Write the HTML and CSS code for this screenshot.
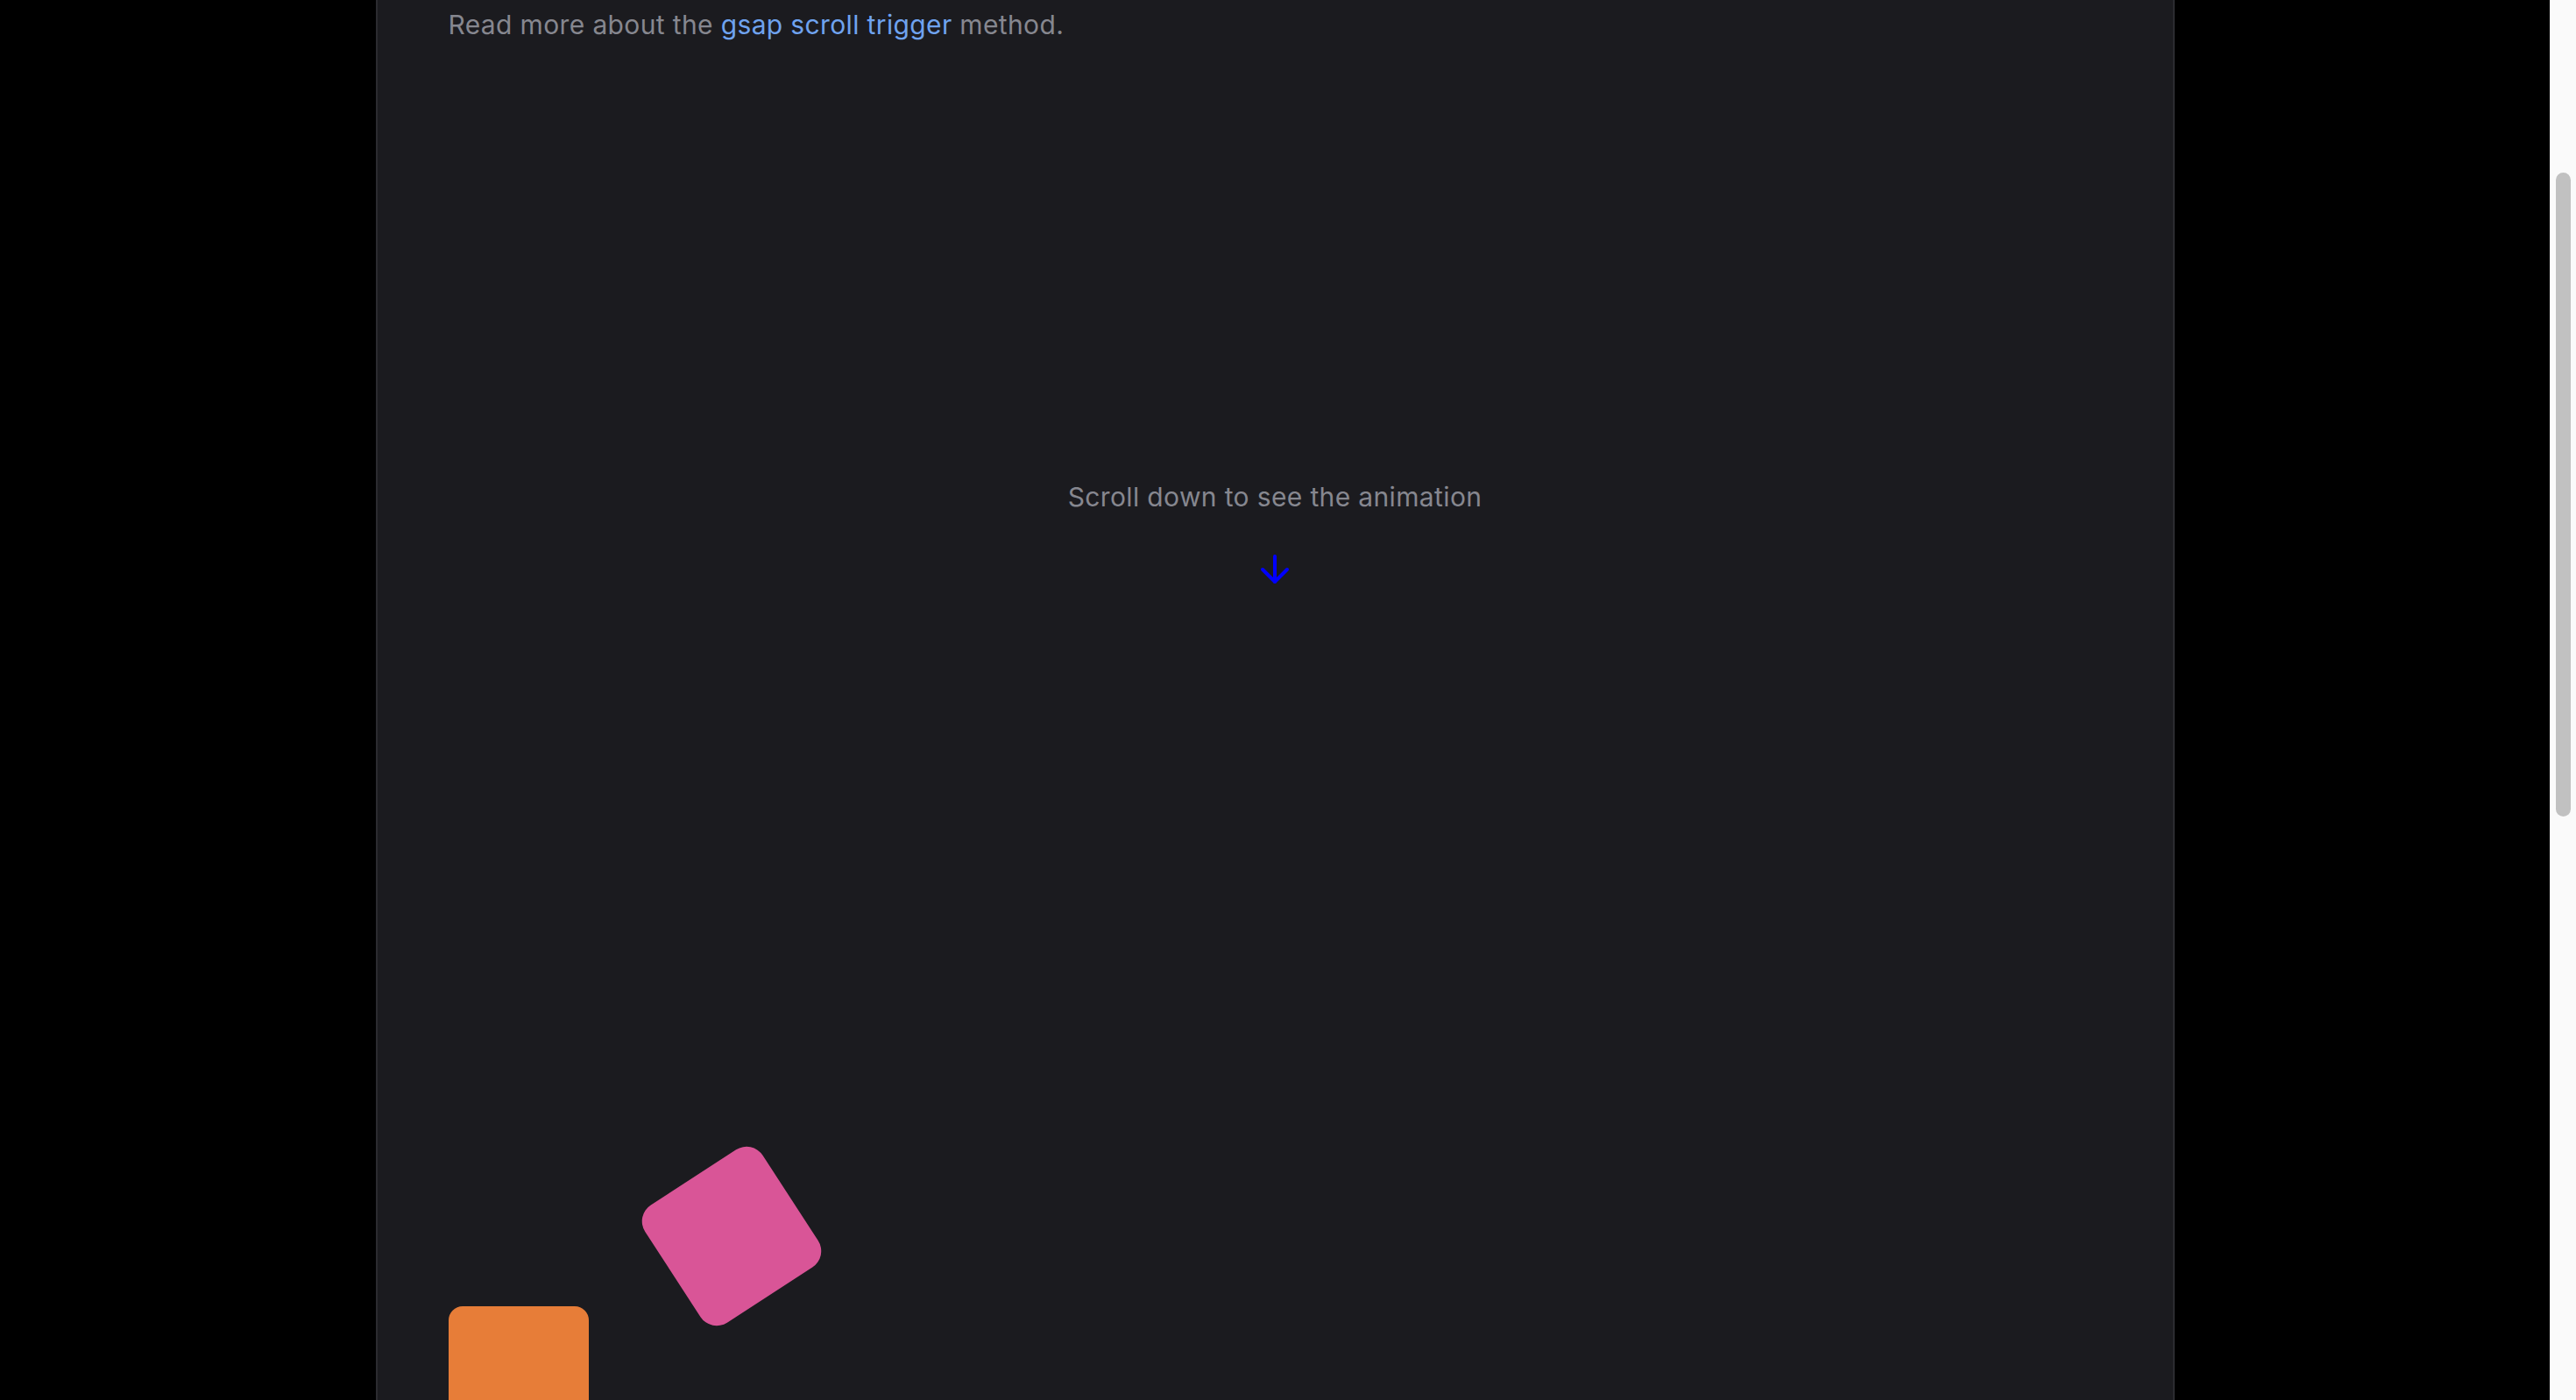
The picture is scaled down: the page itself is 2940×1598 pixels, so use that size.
FILE: index.html
```html
<!DOCTYPE html>
<html lang="en">
<head>
<meta charset="utf-8">
<title>GSAP Scroll Trigger</title>
<link rel="stylesheet" href="styles.css">
</head>
<body>
<div class="page">
  <div class="main">
    <div class="container">
      <p class="intro">Read more about the <a class="link" href="#">gsap scroll trigger</a> method.</p>
      <p class="hint">Scroll down to see the animation</p>
      <div class="arrow">
        <svg width="36" height="36" viewBox="0 0 36 36" fill="none" stroke="#0000ff" stroke-width="4" stroke-linecap="round" stroke-linejoin="round">
          <path d="M18 3 V32"/>
          <path d="M4 18 L18 32 L32 18"/>
        </svg>
      </div>
      <div class="shapes">
        <div class="box orange"></div>
        <div class="box pink"></div>
      </div>
    </div>
  </div>
  <div class="scrollbar"><div class="thumb"></div></div>
</div>
</body>
</html>
```
FILE: styles.css
```css
html, body {
  margin: 0;
  padding: 0;
  background: #000;
}
.page {
  display: flex;
  height: 1598px;
  overflow: hidden;
  background: #000;
  font-family: Inter, "Noto Sans", "Liberation Sans", sans-serif;
}
.main {
  flex: 1;
  display: flex;
  justify-content: center;
}
.container {
  width: 2053px;
  box-sizing: border-box;
  border-left: 2px solid #2b2b30;
  border-right: 2px solid #2b2b30;
  background: #1b1b1f;
  padding: 2px 81px 0 81px;
  display: flex;
  flex-direction: column;
}
.intro {
  margin: 0;
  font-size: 30px;
  line-height: 52px;
  letter-spacing: 0.36px;
  color: #86878f;
}
.link {
  color: #6fa3ef;
  text-decoration: none;
}
.hint {
  margin: 487px 0 0 0;
  font-size: 30px;
  line-height: 52px;
  letter-spacing: 0.36px;
  color: #86878f;
  text-align: center;
}
.arrow {
  margin-top: 39px;
  display: flex;
  justify-content: center;
  height: 36px;
}
.arrow svg {
  display: block;
}
.shapes {
  margin-top: 823px;
  display: flex;
  align-items: flex-start;
}
.box {
  width: 160px;
  height: 160px;
  flex: none;
}
.orange {
  background: #e77d38;
  border-radius: 16px;
}
.pink {
  background: #d95597;
  border-radius: 22px;
  margin-left: 83px;
  transform: translateY(-160px) rotate(-33deg);
}
.scrollbar {
  width: 30px;
  flex: none;
  box-sizing: border-box;
  background: #fafafa;
  border-left: 1px solid #ebebeb;
  padding-top: 197px;
}
.thumb {
  width: 17px;
  height: 735px;
  margin-left: 6px;
  border-radius: 9px;
  background: #c1c1c1;
}
```
